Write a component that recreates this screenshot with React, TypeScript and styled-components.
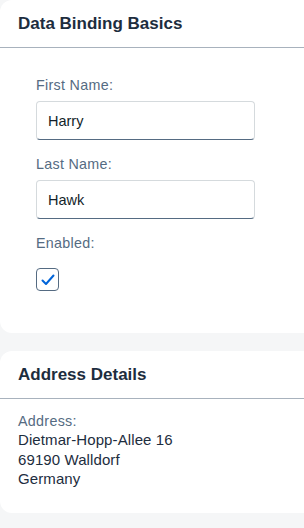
import React, { useState } from "react";
import styled, { createGlobalStyle } from "styled-components";

const GlobalStyle = createGlobalStyle`
  html, body {
    margin: 0;
    padding: 0;
    background: #f5f6f7;
    overflow: hidden;
  }
  body {
    font-family: "Liberation Sans", Arial, sans-serif;
    color: #131e29;
  }
`;

const Page = styled.div`
  display: flex;
  flex-direction: column;
  gap: 18px;
  width: 304px;
`;

const Card = styled.section<{ bodyHeight: number }>`
  background: #fff;
  border-radius: 12px 0 0 12px;
  display: flex;
  flex-direction: column;
  min-height: ${(props) => props.bodyHeight}px;
`;

const CardHeader = styled.header`
  height: 47px;
  padding: 0 18px;
  display: flex;
  align-items: center;
  border-bottom: solid 1px #a8b2bd;
`;

const Title = styled.h2`
  margin: 0;
  font-size: 17px;
  font-weight: bold;
  color: #1d2d3e;
`;

const Form = styled.div`
  padding: 28px 36px 0 36px;
  display: flex;
  flex-direction: column;
  align-items: flex-start;
`;

const Label = styled.label`
  font-size: 14.3px;
  letter-spacing: 0.3px;
  color: #556b82;
  line-height: 18px;
  margin-bottom: 7px;
`;

const Input = styled.input`
  box-sizing: border-box;
  width: 219px;
  height: 39px;
  padding: 0 11px;
  margin-bottom: 15px;
  font-family: inherit;
  font-size: 14.5px;
  color: #131e29;
  background: #fff;
  border: solid 1px #d5dadd;
  border-bottom-color: #556b82;
  border-radius: 4px;
  outline: none;
`;

const CheckboxBox = styled.button<{ checked: boolean }>`
  box-sizing: border-box;
  width: 23px;
  height: 23px;
  padding: 0;
  margin-top: 9px;
  border: solid 1px #556b82;
  border-radius: 4px;
  background: #fff;
  display: flex;
  align-items: center;
  justify-content: center;
  cursor: pointer;
  svg {
    visibility: ${(props) => (props.checked ? "visible" : "hidden")};
  }
`;

const Details = styled.div`
  padding: 13px 18px 0 18px;
  display: flex;
  flex-direction: column;
`;

const DetailLabel = styled.div`
  font-size: 14.3px;
  letter-spacing: 0.3px;
  line-height: 18px;
  color: #556b82;
`;

const DetailValue = styled.div`
  font-size: 15px;
  letter-spacing: 0.1px;
  line-height: 19.5px;
  color: #1d2d3e;
`;

const App = () => {
  const [first, setFirst] = useState("Harry");
  const [last, setLast] = useState("Hawk");
  const [enabled, setEnabled] = useState(true);

  return (
    <Page>
      <GlobalStyle />
      <Card bodyHeight={333}>
        <CardHeader>
          <Title>Data Binding Basics</Title>
        </CardHeader>
        <Form>
          <Label>First Name:</Label>
          <Input value={first} onChange={(e) => setFirst(e.target.value)} />
          <Label>Last Name:</Label>
          <Input value={last} onChange={(e) => setLast(e.target.value)} />
          <Label>Enabled:</Label>
          <CheckboxBox checked={enabled} onClick={() => setEnabled(!enabled)}>
            <svg width="14" height="12" viewBox="0 0 14 12">
              <path
                d="M1.5 6.5 L5 10 L12.5 1.5"
                fill="none"
                stroke="#0064d9"
                strokeWidth="2"
                strokeLinecap="round"
                strokeLinejoin="round"
              />
            </svg>
          </CheckboxBox>
        </Form>
      </Card>
      <Card bodyHeight={162}>
        <CardHeader>
          <Title>Address Details</Title>
        </CardHeader>
        <Details>
          <DetailLabel>Address:</DetailLabel>
          <DetailValue>Dietmar-Hopp-Allee 16</DetailValue>
          <DetailValue>69190 Walldorf</DetailValue>
          <DetailValue>Germany</DetailValue>
        </Details>
      </Card>
    </Page>
  );
};

export default App;
